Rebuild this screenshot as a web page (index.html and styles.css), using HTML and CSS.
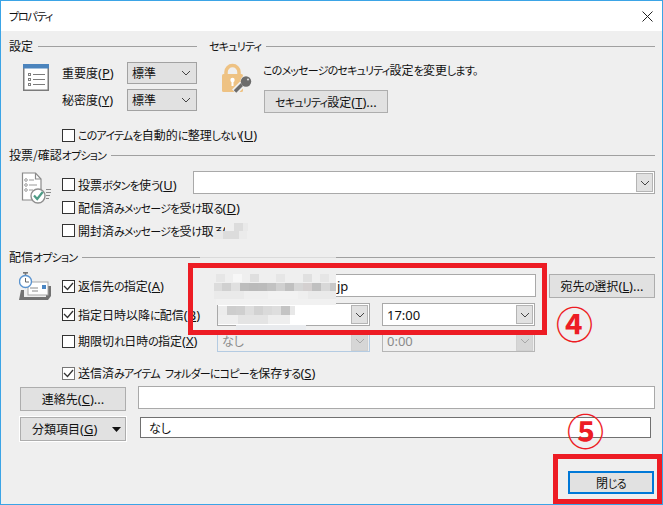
FILE: index.html
```html
<!DOCTYPE html>
<html lang="ja">
<head>
<meta charset="utf-8">
<title>プロパティ</title>
<link rel="stylesheet" href="styles.css">
</head>
<body>
<div class="window">
  <header class="titlebar">
    <span class="k k-title">プロパティ</span>
    <svg class="close" width="11" height="11" viewBox="0 0 11 11"><path d="M.5.5l10 10M10.500.5l-10 10" stroke="#222" stroke-width="1" fill="none"/></svg>
  </header>
  <main class="content">
    <div class="top">
      <section class="settings">
        <div class="legend"><span>設定</span><i></i></div>
        <div class="settings-grid">
          <svg class="icon-list" width="26" height="27" viewBox="0 0 26 27">
            <rect x=".75" y=".75" width="24.500" height="25.500" fill="#fff" stroke="#7b7b7b" stroke-width="1.500"/>
            <rect width="26" height="4.500" fill="#4b84bd"/>
            <g fill="#fff" stroke="#808080" stroke-width="1"><rect x="5.500" y="9.500" width="2" height="2"/><rect x="5.500" y="14.500" width="2" height="2"/><rect x="5.500" y="19.500" width="2" height="2"/></g>
            <g stroke="#7b7b7b" stroke-width="1.200"><path d="M10 10.500h12M10 15.500h12M10 20.500h12"/></g>
          </svg>
          <label class="field-label">重要度<span class="key">(<u>P</u>)</span></label>
          <div class="select"><span>標準</span><svg width="10" height="6" viewBox="0 0 10 6"><path d="M1 1l4 4 4-4" class="chev"/></svg></div>
          <label class="field-label">秘密度<span class="key">(<u>Y</u>)</span></label>
          <div class="select"><span>標準</span><svg width="10" height="6" viewBox="0 0 10 6"><path d="M1 1l4 4 4-4" class="chev"/></svg></div>
        </div>
        <div class="check-row organize"><span class="box"></span><span><span class="k">このアイテムを</span>自動的<span class="k">に</span>整理<span class="k">しない</span><span class="key">(<u>U</u>)</span></span></div>
      </section>
      <section class="security">
        <div class="legend"><span class="k">セキュリティ</span><i></i></div>
        <div class="security-body">
          <svg class="icon-lock" width="32" height="31" viewBox="0 0 32 31">
            <path d="M5 12V9a6.500 6.500 0 0 1 13 0v3" fill="none" stroke="#eec283" stroke-width="3.500"/>
            <rect x="1" y="11" width="21" height="18" rx="1.500" fill="#eec283"/>
            <circle cx="11.500" cy="17" r="2.200" fill="#fff"/><rect x="10.500" y="18" width="2" height="5" fill="#fff"/>
            <path d="M13.500 29l8-8" stroke="#efefef" stroke-width="7"/>
            <path d="M14 28.500l8.500-8.500" stroke="#6c6c6c" stroke-width="3.500"/>
            <circle cx="25.500" cy="18" r="6" fill="#efefef"/><circle cx="25" cy="18.500" r="5.200" fill="#6c6c6c"/>
            <circle cx="27" cy="16.500" r="1.100" fill="#d8d8d8"/>
          </svg>
          <div class="security-main">
            <p><span class="k">このメッセージのセキュリティ</span>設定<span class="k">を</span>変更<span class="k">します。</span></p>
            <button class="btn btn-security" type="button"><span class="k">セキュリティ</span>設定<span class="key">(<u>T</u>)...</span></button>
          </div>
        </div>
      </section>
    </div>

    <section class="vote">
      <div class="legend"><span>投票/確認<span class="k">オプション</span></span><i></i></div>
      <div class="vote-body">
        <div class="icon-col">
          <svg class="icon-vote" width="31" height="32" viewBox="0 0 31 32">
            <path d="M1.500 1h13l5.500 6v21H1.500z" fill="#fff" stroke="#8a8a8a" stroke-width="1.200"/>
            <path d="M14.500 1v6H20" fill="none" stroke="#8a8a8a" stroke-width="1.200"/>
            <g fill="#fff" stroke="#9a9a9a"><circle cx="5" cy="8" r="1.300"/><circle cx="5" cy="13" r="1.300"/><circle cx="5" cy="18" r="1.300"/></g>
            <path d="M8 8h5M8 13h8M8 18h4" stroke="#999" stroke-width="1"/>
            <circle cx="17" cy="24" r="7" fill="#fff" stroke="#8f8f8f" stroke-width="1.400"/>
            <path d="M13 23.500l3.200 3.500 5.500-7" fill="none" stroke="#4e9c86" stroke-width="2.200"/>
            <path d="M25 17.500h5M25 20.500h5M25 23.500h4M25 26.500h3" stroke="#8a8a8a" stroke-width="1"/>
          </svg>
        </div>
        <div class="vote-rows">
          <div class="vote-first">
            <div class="check-row vote-check"><span class="box"></span><span>投票<span class="k">ボタンを</span>使<span class="k">う</span><span class="key">(<u>U</u>)</span></span></div>
            <div class="combo combo-wide"><span class="combo-text"></span><span class="drop"><svg width="10" height="6" viewBox="0 0 10 6"><path d="M1 1l4 4 4-4" class="chev"/></svg></span></div>
          </div>
          <div class="check-row tall"><span class="box"></span><span>配信済<span class="k">みメッセージを</span>受<span class="k">け</span>取<span class="k">る</span><span class="key">(<u>D</u>)</span></span></div>
          <div class="check-row tall"><span class="box"></span><span>開封済<span class="k">みメッセージを</span>受<span class="k">け</span>取<span class="k">る</span><span class="key">(<u>R</u>)</span></span></div>
        </div>
      </div>
    </section>

    <section class="delivery">
      <div class="legend"><span>配信<span class="k">オプション</span></span><i></i></div>
      <div class="delivery-body">
        <div class="icon-col">
          <svg class="icon-delivery" width="33" height="30" viewBox="0 0 33 30">
            <path d="M0 28l2-10h3v7h22v-9l2-2h3v10l-3 4z" fill="#737373"/>
            <rect x="9" y="10" width="20" height="13" fill="#fff" stroke="#a8a8a8"/>
            <rect x="23" y="13" width="4" height="4" fill="#4a86c4"/>
            <path d="M11 16h8M13 19h6" stroke="#8a8a8a" stroke-width="1"/>
            <rect x="4" y="0" width="5" height="1.600" fill="#777"/><rect x="5.700" y="1" width="1.600" height="2.500" fill="#777"/>
            <circle cx="6.500" cy="9.500" r="6" fill="#fff" stroke="#5b94d0" stroke-width="1.400"/>
            <path d="M6.500 6v4H10" fill="none" stroke="#666" stroke-width="1"/>
          </svg>
        </div>
        <div class="delivery-rows">
          <div class="row row-reply">
            <div class="check-row label-col"><span class="box"><svg width="11" height="9" viewBox="0 0 11 9"><path d="M1 4l3.500 3.500L10 1" class="tick"/></svg></span><span>返信先<span class="k">の</span>指定<span class="key">(<u>A</u>)</span></span></div>
            <div class="input input-reply"><span>jp</span></div>
            <button class="btn btn-pick" type="button"><span>宛先<span class="k">の</span>選択<span class="key">(<u>L</u>)...</span></span></button>
          </div>
          <div class="row row-date">
            <div class="check-row label-col"><span class="box"><svg width="11" height="9" viewBox="0 0 11 9"><path d="M1 4l3.500 3.500L10 1" class="tick"/></svg></span><span>指定日時以降<span class="k">に</span>配信<span class="key">(<u>B</u>)</span></span></div>
            <div class="combo combo-date"><span class="combo-text"></span><span class="drop"><svg width="10" height="6" viewBox="0 0 10 6"><path d="M1 1l4 4 4-4" class="chev"/></svg></span></div>
            <div class="combo combo-time"><span class="combo-text num-text">17:00</span><span class="drop"><svg width="10" height="6" viewBox="0 0 10 6"><path d="M1 1l4 4 4-4" class="chev"/></svg></span></div>
          </div>
          <div class="row row-expire">
            <div class="check-row label-col"><span class="box"></span><span>期限切<span class="k">れ</span>日時<span class="k">の</span>指定<span class="key">(<u>X</u>)</span></span></div>
            <div class="combo combo-date off blue"><span class="combo-text">なし</span><span class="drop"><svg width="10" height="6" viewBox="0 0 10 6"><path d="M1 1l4 4 4-4" class="chev"/></svg></span></div>
            <div class="combo combo-time off"><span class="combo-text num-text">0:00</span><span class="drop"><svg width="10" height="6" viewBox="0 0 10 6"><path d="M1 1l4 4 4-4" class="chev"/></svg></span></div>
          </div>
          <div class="check-row row-save"><span class="box dim"><svg width="11" height="9" viewBox="0 0 11 9"><path d="M1 4l3.500 3.500L10 1" class="tick"/></svg></span><span>送信済<span class="k">みアイテム</span><span class="gap"></span><span class="k">フォルダーにコピーを</span>保存<span class="k">する</span><span class="key">(<u>S</u>)</span></span></div>
        </div>
      </div>
      <div class="row row-contact">
        <button class="btn btn-side" type="button"><span>連絡先<span class="key">(<u>C</u>)...</span></span></button>
        <div class="input input-contact"></div>
      </div>
      <div class="row row-category">
        <button class="btn btn-side btn-cat" type="button"><span>分類項目<span class="key">(<u>G</u>)</span></span><svg width="9" height="5" viewBox="0 0 9 5"><path d="M0 0h9L4.500 5z" fill="#111"/></svg></button>
        <div class="input input-category"><span>なし</span></div>
      </div>
    </section>

    <footer class="footer"><button class="btn btn-close" type="button"><span>閉<span class="k">じる</span></span></button></footer>
  </main>

  <svg class="mosaic" width="128" height="64" viewBox="0 0 128 64">
    <rect x="0" y="0" width="128" height="33" fill="#efefef"/>
    <g fill="#e6e6e6"><rect x="8" y="2" width="9" height="8"/><rect x="42" y="2" width="9" height="8" fill="#dfdfdf"/><rect x="68" y="2" width="9" height="8"/><rect x="95" y="2" width="9" height="8" fill="#e0e0e0"/><rect x="112" y="2" width="9" height="8"/></g>
    <rect x="25" y="2" width="9" height="8" fill="#f7f7f7"/>
    <g fill="#dcdcdc"><rect x="6" y="11" width="8" height="8"/><rect x="14" y="11" width="9" height="8" fill="#d0d0d0"/><rect x="23" y="11" width="9" height="8" fill="#e0e0e0"/><rect x="32" y="11" width="9" height="8" fill="#bdbdbd"/><rect x="41" y="11" width="9" height="8" fill="#bababa"/><rect x="50" y="11" width="9" height="8" fill="#bbb"/><rect x="59" y="11" width="9" height="8" fill="#c2c2c2"/><rect x="68" y="11" width="9" height="8" fill="#d0d0d0"/><rect x="77" y="11" width="9" height="8" fill="#c0c0c0"/><rect x="86" y="11" width="9" height="8" fill="#d6d6d6"/><rect x="95" y="11" width="9" height="8" fill="#d4d0d0"/><rect x="104" y="11" width="9" height="8" fill="#c0c0c0"/><rect x="113" y="11" width="9" height="8" fill="#d8d8d8"/><rect x="122" y="11" width="6" height="8" fill="#c8c8c8"/></g>
    <g fill="#eaeaea"><rect x="6" y="19" width="30" height="8"/><rect x="60" y="19" width="30" height="8" fill="#f2f2f2"/><rect x="100" y="19" width="28" height="8"/></g>
    <rect x="8" y="27" width="120" height="6" fill="#f1f1f1"/>
    <rect x="10" y="33" width="77" height="10" fill="#fff"/>
    <g fill="#dedede"><rect x="10" y="34" width="9" height="9" fill="#ececec"/><rect x="19" y="34" width="9" height="9" fill="#cdcdcd"/><rect x="28" y="34" width="9" height="9" fill="#cfcfcf"/><rect x="37" y="34" width="9" height="9"/><rect x="46" y="34" width="9" height="9" fill="#d2d2d2"/><rect x="55" y="34" width="9" height="9" fill="#dadada"/><rect x="64" y="34" width="9" height="9"/><rect x="73" y="34" width="9" height="9" fill="#c4c4c4"/><rect x="82" y="34" width="5" height="9" fill="#e8e8e8"/></g>
    <g fill="#eeeeee"><rect x="10" y="43" width="20" height="9"/><rect x="30" y="43" width="30" height="9" fill="#e4e4e4"/><rect x="60" y="43" width="22" height="9"/></g>
    <rect x="28" y="53" width="70" height="5" fill="#e9ebee"/>
  </svg>
  <svg class="mosaic-mid" width="136" height="42" viewBox="0 0 136 42">
    <rect x="25" y="1" width="24" height="17" fill="#efefef"/>
    <g><rect x="34" y="1" width="9" height="8" fill="#dcdcdc"/><rect x="43" y="1" width="5" height="8" fill="#e9e9e9"/><rect x="14" y="9" width="9" height="8" fill="#e9e9e9"/><rect x="23" y="9" width="16" height="8" fill="#dcdcdc"/><rect x="39" y="9" width="8" height="8" fill="#ebebeb"/></g>
    <rect x="0" y="28" width="136" height="14" fill="#ededed" fill-opacity=".75"/>
  </svg>

  <div class="mark mark-four"></div>
  <div class="mark mark-five"></div>
  <span class="num num-four">④</span>
  <span class="num num-five">⑤</span>
</div>
</body>
</html>
```

FILE: styles.css
```css
* { box-sizing: border-box; }
html, body { margin: 0; padding: 0; }
body { width: 663px; height: 505px; overflow: hidden; background: #efefef; }
.window {
  position: relative; width: 663px; height: 505px;
  border: 1px solid #3ba4e6; background: #efefef;
  font: 12px/16px "Noto Sans CJK JP", sans-serif;
  font-feature-settings: "palt"; color: #111;
}
.window u { text-underline-offset: 1px; }
.k { font-size: 11px; letter-spacing: -.8px; }
.k-title { letter-spacing: -1.2px; }
.gap { display: inline-block; width: 5px; }
.key { font-family: "Noto Sans", sans-serif; font-size: 13px; }
.num-text { font-family: "Noto Sans", sans-serif; font-size: 13px; }
.titlebar {
  height: 30px; background: #fff; display: flex; align-items: center;
  justify-content: space-between; padding: 0 9px 0 8px;
}
.content { padding: 7px 7px 0 8px; }
.legend { display: flex; align-items: center; gap: 5px; height: 16px; white-space: nowrap; }
.legend i { flex: 1; height: 1px; background: #a0a0a0; }
.top { display: flex; gap: 12px; height: 109px; }
.settings { width: 188px; flex: none; }
.security { flex: 1; }
.settings-grid {
  display: grid; grid-template-columns: 53px 65px 70px; grid-auto-rows: 22px;
  row-gap: 5px; margin-top: 8px; align-items: center;
}
.icon-list { grid-row: 1 / span 2; margin: 2px 0 0 14px; align-self: start; }
.field-label { white-space: nowrap; }
.select {
  display: flex; align-items: center; justify-content: space-between;
  height: 22px; border: 1px solid #a2a2a2; background: #e1e1e1; padding: 0 5px 0 4px;
}
.chev { fill: none; stroke: #444; stroke-width: 1; }
.check-row { display: flex; align-items: center; white-space: nowrap; }
.box {
  width: 13px; height: 13px; flex: none; margin-right: 3px; background: #fff;
  border: 1px solid #333; display: flex; align-items: center; justify-content: center;
}
.box.dim { border-color: #777; }
.tick { fill: none; stroke: #333; stroke-width: 1.300; }
.organize { height: 20px; margin: 14px 0 0 53px; }
.security-body { display: flex; margin-top: 8px; padding-left: 12px; }
.icon-lock { flex: none; margin: 1px 10px 0 0; }
.security-main p { margin: 0; height: 16px; }
.btn {
  display: flex; align-items: center; justify-content: center;
  border: 1px solid #adadad; background: #e1e1e1; color: #111;
  font: inherit; font-feature-settings: inherit; padding: 0; margin: 0;
}
.btn-security { width: 124px; height: 23px; margin: 12px 0 0 1px; }
.vote { height: 102px; }
.vote-body { display: flex; margin-top: 8px; }
.icon-col { width: 53px; flex: none; }
.icon-vote { margin: 1px 0 0 12px; display: block; }
.vote-rows { flex: 1; }
.vote-first { display: flex; height: 25px; }
.vote-check { width: 131px; height: 23px; margin-top: 2px; flex: none; }
.tall { height: 23px; }
.combo { display: flex; align-items: center; background: #fff; border: 1px solid #a9a9a9; padding: 0 1px 0 4px; }
.combo-wide { flex: 1; height: 23px; }
.combo-text { flex: 1; }
.drop {
  width: 17px; height: 19px; flex: none; display: flex; align-items: center; justify-content: center;
  background: #e1e1e1; border: 1px solid #b4b4b4;
}
.delivery { height: 222px; }
.delivery-body { display: flex; margin-top: 9px; }
.icon-delivery { display: block; margin: -2px 0 0 10px; }
.delivery-rows { flex: 1; }
.row { display: flex; align-items: center; }
.label-col { width: 155px; flex: none; }
.row-reply { height: 24px; }
.input { background: #fff; border: 1px solid #a9a9a9; display: flex; align-items: center; }
.input-reply { width: 319px; height: 23px; padding-left: 119px; font-family: "Noto Sans", sans-serif; font-size: 13px; align-self: flex-start; }
.btn-pick { width: 106px; height: 24px; margin-left: 13px; }
.row-date { height: 23px; margin-top: 5px; }
.combo-date { width: 153px; height: 23px; }
.combo-time { width: 153px; height: 23px; margin-left: 12px; }
.row-expire { height: 22px; margin-top: 4px; }
.row-expire .combo { height: 22px; }
.off { background: #efefef; color: #8b8b8b; }
.off .drop { background: #d6d6d6; border-color: #d0d0d0; }
.off .chev { stroke: #a8a8a8; }
.off.blue { border-color: #b4cbe2; }
.off:not(.blue) { border-color: #b6b6b6; }
.row-save { height: 20px; margin-top: 11px; }
.row-contact { height: 24px; margin-top: 4px; padding-left: 11px; align-items: flex-start; }
.btn-side { width: 106px; height: 24px; }
.input-contact { flex: 1; height: 23px; margin: -1px 0 0 12px; }
.row-category { height: 24px; margin-top: 6px; padding-left: 11px; align-items: flex-start; }
.btn-cat { justify-content: space-between; padding: 0 4px 0 11px; outline: 1px solid #fff; }
.input-category { width: 511px; height: 21px; margin-left: 14px; border-color: #707070; padding-left: 8px; }
.footer { display: flex; justify-content: flex-end; padding-right: 1px; }
.btn-close { width: 86px; height: 23px; border: 2px solid #0078d7; }
.mosaic { position: absolute; left: 207px; top: 271px; }
.mosaic-mid { position: absolute; left: 199px; top: 221px; }
.mark { position: absolute; border: 5px solid #ed1c24; }
.mark-four { left: 187px; top: 262px; width: 359px; height: 72px; }
.mark-five { left: 552px; top: 453px; width: 109px; height: 50px; }
.num {
  position: absolute; color: #ed1c24; font: 700 37px/37px "Noto Sans CJK JP", sans-serif;
}
.num-four { left: 555px; top: 304px; }
.num-five { left: 566px; top: 411px; }
```
